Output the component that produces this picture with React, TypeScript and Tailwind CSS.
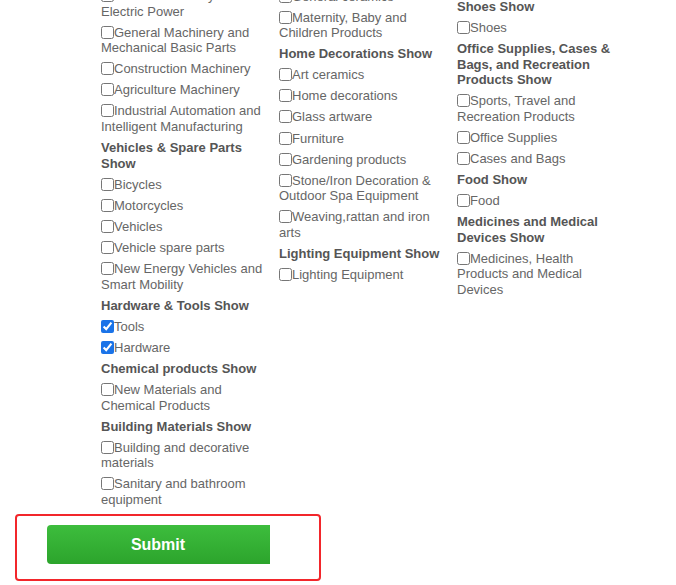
import React from 'react';

type Entry = { kind: 'head' | 'item'; text: string; checked?: boolean };

const h = (text: string): Entry => ({ kind: 'head', text });
const i = (text: string, checked = false): Entry => ({ kind: 'item', text, checked });

const leftCol: Entry[] = [
  i('Power Machinery and Electric Power'),
  i('General Machinery and Mechanical Basic Parts'),
  i('Construction Machinery'),
  i('Agriculture Machinery'),
  i('Industrial Automation and Intelligent Manufacturing'),
  h('Vehicles & Spare Parts Show'),
  i('Bicycles'),
  i('Motorcycles'),
  i('Vehicles'),
  i('Vehicle spare parts'),
  i('New Energy Vehicles and Smart Mobility'),
  h('Hardware & Tools Show'),
  i('Tools', true),
  i('Hardware', true),
  h('Chemical products Show'),
  i('New Materials and Chemical Products'),
  h('Building Materials Show'),
  i('Building and decorative materials'),
  i('Sanitary and bathroom equipment'),
];

const midCol: Entry[] = [
  i('General ceramics'),
  i('Maternity, Baby and Children Products'),
  h('Home Decorations Show'),
  i('Art ceramics'),
  i('Home decorations'),
  i('Glass artware'),
  i('Furniture'),
  i('Gardening products'),
  i('Stone/Iron Decoration & Outdoor Spa Equipment'),
  i('Weaving,rattan and iron arts'),
  h('Lighting Equipment Show'),
  i('Lighting Equipment'),
];

const rightCol: Entry[] = [
  h('Shoes Show'),
  i('Shoes'),
  h('Office Supplies, Cases & Bags, and Recreation Products Show'),
  i('Sports, Travel and Recreation Products'),
  i('Office Supplies'),
  i('Cases and Bags'),
  h('Food Show'),
  i('Food'),
  h('Medicines and Medical Devices Show'),
  i('Medicines, Health Products and Medical Devices'),
];

function Column({ entries, className = '' }: { entries: Entry[]; className?: string }) {
  return (
    <div className={`flex flex-col gap-[5.6px] ${className}`}>
      {entries.map((e) =>
        e.kind === 'head' ? (
          <div key={e.text} className="font-bold text-[#555] leading-[15.5px]">
            {e.text}
          </div>
        ) : (
          <label key={e.text} className="block text-[#666] leading-[15.5px]">
            <input
              type="checkbox"
              defaultChecked={e.checked}
              className="m-0 w-[13px] h-[13px] align-[-2px] accent-[#1a73e8]"
            />
            {e.text}
          </label>
        )
      )}
    </div>
  );
}

export default function App() {
  return (
    <div
      className="w-[676px] h-[585px] overflow-hidden bg-white text-[13px]"
      style={{ fontFamily: '"Liberation Sans", Arial, sans-serif' }}
    >
      {/* Category checkboxes */}
      <div className="grid grid-cols-[168px_168px_168px] gap-x-[10px] pl-[101px] mt-[-11.9px] items-start">
        <Column entries={leftCol} />
        <Column entries={midCol} className="mt-[0.4px]" />
        <Column entries={rightCol} className="mt-[10.9px]" />
      </div>

      {/* Submit, boxed in red */}
      <div className="ml-[15px] mt-[6.6px] w-[306px] h-[67px] border-[2.5px] border-[#f2262b] rounded-[4px] pl-[29.5px] pt-[9.5px]">
        <button className="w-[223px] h-[39px] rounded-l-[4px] bg-gradient-to-b from-[#3dbd3d] to-[#2ca42c] text-white font-bold text-[16px]">
          Submit
        </button>
      </div>
    </div>
  );
}
